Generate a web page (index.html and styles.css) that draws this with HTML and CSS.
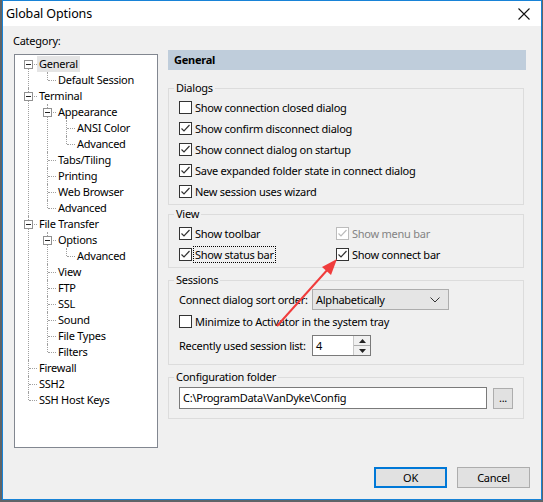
FILE: index.html
```html
<!DOCTYPE html>
<html>
<head>
<meta charset="utf-8">
<link rel="stylesheet" href="styles.css">
</head>
<body>
<div class="window">
  <div class="titlebar">
    <span class="title">Global Options</span>
    <svg class="close" width="12" height="12" viewBox="0 0 12 12"><path d="M0.5 0.5L11.5 11.5M11.5 0.5L0.5 11.5" stroke="#111" stroke-width="1.1" fill="none"/></svg>
  </div>
  <div class="content">
    <div class="main">
      <div class="leftcol">
        <div class="catlabel">Category:</div>
        <div class="treebox">
          <ul class="tree root">
            <li class="first"><div class="row"><span class="exp"></span><span class="lbl sel">General</span></div>
              <ul><li class="last"><div class="row"><span class="lbl">Default Session</span></div></li></ul>
            </li>
            <li><div class="row"><span class="exp"></span><span class="lbl">Terminal</span></div>
              <ul>
                <li><div class="row"><span class="exp"></span><span class="lbl">Appearance</span></div>
                  <ul>
                    <li><div class="row"><span class="lbl">ANSI Color</span></div></li>
                    <li class="last"><div class="row"><span class="lbl">Advanced</span></div></li>
                  </ul>
                </li>
                <li><div class="row"><span class="lbl">Tabs/Tiling</span></div></li>
                <li><div class="row"><span class="lbl">Printing</span></div></li>
                <li><div class="row"><span class="lbl">Web Browser</span></div></li>
                <li class="last"><div class="row"><span class="lbl">Advanced</span></div></li>
              </ul>
            </li>
            <li><div class="row"><span class="exp"></span><span class="lbl">File Transfer</span></div>
              <ul>
                <li><div class="row"><span class="exp"></span><span class="lbl">Options</span></div>
                  <ul>
                    <li class="last"><div class="row"><span class="lbl">Advanced</span></div></li>
                  </ul>
                </li>
                <li><div class="row"><span class="lbl">View</span></div></li>
                <li><div class="row"><span class="lbl">FTP</span></div></li>
                <li><div class="row"><span class="lbl">SSL</span></div></li>
                <li><div class="row"><span class="lbl">Sound</span></div></li>
                <li><div class="row"><span class="lbl">File Types</span></div></li>
                <li class="last"><div class="row"><span class="lbl">Filters</span></div></li>
              </ul>
            </li>
            <li><div class="row"><span class="lbl">Firewall</span></div></li>
            <li><div class="row"><span class="lbl">SSH2</span></div></li>
            <li class="last"><div class="row"><span class="lbl">SSH Host Keys</span></div></li>
          </ul>
        </div>
      </div>
      <div class="rightcol">
        <div class="header">General</div>
        <fieldset class="group">
          <legend>Dialogs</legend>
          <div class="chk"><span class="cb"></span><span>Show connection closed dialog</span></div>
          <div class="chk"><span class="cb"><svg width="11" height="11" viewBox="0 0 11 11"><path d="M1.5 5.5L4 8L9.5 2" stroke="#333" stroke-width="1.2" fill="none"/></svg></span><span>Show confirm disconnect dialog</span></div>
          <div class="chk"><span class="cb"><svg width="11" height="11" viewBox="0 0 11 11"><path d="M1.5 5.5L4 8L9.5 2" stroke="#333" stroke-width="1.2" fill="none"/></svg></span><span>Show connect dialog on startup</span></div>
          <div class="chk"><span class="cb"><svg width="11" height="11" viewBox="0 0 11 11"><path d="M1.5 5.5L4 8L9.5 2" stroke="#333" stroke-width="1.2" fill="none"/></svg></span><span>Save expanded folder state in connect dialog</span></div>
          <div class="chk"><span class="cb"><svg width="11" height="11" viewBox="0 0 11 11"><path d="M1.5 5.5L4 8L9.5 2" stroke="#333" stroke-width="1.2" fill="none"/></svg></span><span>New session uses wizard</span></div>
        </fieldset>
        <fieldset class="group">
          <legend>View</legend>
          <div class="viewgrid">
            <div class="chk"><span class="cb"><svg width="11" height="11" viewBox="0 0 11 11"><path d="M1.5 5.5L4 8L9.5 2" stroke="#333" stroke-width="1.2" fill="none"/></svg></span><span>Show toolbar</span></div>
            <div class="chk disabled"><span class="cb"><svg width="11" height="11" viewBox="0 0 11 11"><path d="M1.5 5.5L4 8L9.5 2" stroke="#bcbcbc" stroke-width="1.2" fill="none"/></svg></span><span>Show menu bar</span></div>
            <div class="chk"><span class="cb"><svg width="11" height="11" viewBox="0 0 11 11"><path d="M1.5 5.5L4 8L9.5 2" stroke="#333" stroke-width="1.2" fill="none"/></svg></span><span class="focus">Show status bar</span></div>
            <div class="chk"><span class="cb"><svg width="11" height="11" viewBox="0 0 11 11"><path d="M1.5 5.5L4 8L9.5 2" stroke="#333" stroke-width="1.2" fill="none"/></svg></span><span>Show connect bar</span></div>
          </div>
        </fieldset>
        <fieldset class="group sessions">
          <legend>Sessions</legend>
          <div class="frow">
            <span class="flabel">Connect dialog sort order:</span>
            <div class="select"><span>Alphabetically</span><svg width="10" height="6" viewBox="0 0 10 6"><path d="M0.5 0.5L5 5L9.5 0.5" stroke="#333" stroke-width="1" fill="none"/></svg></div>
          </div>
          <div class="chk"><span class="cb"></span><span>Minimize to Activator in the system tray</span></div>
          <div class="frow recent">
            <span class="flabel">Recently used session list:</span>
            <div class="spin">
              <span class="spinval">4</span>
              <div class="spinbtns">
                <div class="sbtn"><svg width="7" height="4" viewBox="0 0 7 4"><path d="M0 4L3.5 0L7 4Z" fill="#222"/></svg></div>
                <div class="sbtn"><svg width="7" height="4" viewBox="0 0 7 4"><path d="M0 0L3.5 4L7 0Z" fill="#222"/></svg></div>
              </div>
            </div>
          </div>
        </fieldset>
        <fieldset class="group config">
          <legend>Configuration folder</legend>
          <div class="cfgrow">
            <div class="textbox">C:\ProgramData\VanDyke\Config</div>
            <div class="browse">...</div>
          </div>
        </fieldset>
      </div>
    </div>
    <div class="footer">
      <div class="btn default">OK</div>
      <div class="btn">Cancel</div>
    </div>
  </div>
  <svg class="arrow" width="80" height="80" viewBox="0 0 80 80">
    <line x1="4" y1="74" x2="56" y2="16" stroke="#f03c3c" stroke-width="2"/>
    <path d="M64 7L49 15L58 23Z" fill="#f03c3c"/>
  </svg>
</div>
</body>
</html>
```

FILE: styles.css
```css
* { box-sizing: border-box; }
html, body { margin: 0; padding: 0; }
body {
  width: 543px;
  height: 502px;
  background: #5f6468;
  font-family: "Noto Sans", "Open Sans", sans-serif;
  font-size: 11px;
  letter-spacing: -0.25px;
  color: #000;
  overflow: hidden;
}
.window {
  position: relative;
  margin-left: 2px;
  width: 540px;
  height: 500px;
  border: 1px solid #1883d7;
  background: #f0f0f0;
  display: flex;
  flex-direction: column;
}
.titlebar {
  height: 25px;
  background: #fff;
  display: flex;
  align-items: center;
  justify-content: space-between;
  padding: 0 11px 0 3px;
}
.title { font-size: 12.5px; letter-spacing: -0.1px; }
.close { display: block; margin-top: 1px; }
.content {
  flex: 1;
  display: flex;
  flex-direction: column;
}
.main {
  display: flex;
  padding-left: 11px;
  gap: 10px;
}
.leftcol { width: 144px; }
.catlabel { padding-top: 7px; height: 28px; line-height: 16px; margin-left: -1px; }
.treebox {
  height: 394px;
  background: #fff;
  border: 1px solid #828790;
  padding-top: 1px;
}
.tree, .tree ul { list-style: none; margin: 0; padding: 0; }
.tree ul { padding-left: 19px; }
.tree li { position: relative; }
.tree li::before {
  content: "";
  position: absolute;
  left: 13px;
  top: 0;
  bottom: 0;
  border-left: 1px dotted #a0a0a0;
}
.tree li.first::before { top: 8px; }
.tree li.last::before { bottom: auto; height: 8px; }
.row {
  position: relative;
  height: 16px;
  display: flex;
  align-items: center;
  padding-left: 22px;
}
.row::before {
  content: "";
  position: absolute;
  left: 14px;
  top: 8px;
  width: 8px;
  border-top: 1px dotted #a0a0a0;
}
.exp {
  position: absolute;
  left: 9px;
  top: 4px;
  width: 9px;
  height: 9px;
  border: 1px solid #919191;
  background: #fff;
  z-index: 1;
}
.exp::after {
  content: "";
  position: absolute;
  left: 1px;
  top: 3px;
  width: 5px;
  height: 1px;
  background: #222;
}
.lbl { padding: 0 2px; line-height: 16px; white-space: nowrap; }
.lbl.sel { background: #e5e5e5; }

.rightcol { width: 358px; padding-top: 24px; }
.header {
  height: 20px;
  background: #bfcddb;
  font-weight: bold;
  padding-left: 6px;
  line-height: 20px;
  margin-bottom: 10px;
}
.group {
  margin: 0 2px 0 0;
  padding: 1px 0 2px 0;
  border: 1px solid #dcdcdc;
  min-width: 0;
}
.group + .group { margin-top: 1px; }
.group.sessions, .group.config { margin-top: 4px; }
.group legend {
  padding: 0 2px;
  margin-left: 5px;
  line-height: 16px;
}
.chk {
  height: 21px;
  display: flex;
  align-items: center;
  padding-left: 10px;
  white-space: nowrap;
}
.cb {
  width: 13px;
  height: 13px;
  border: 1px solid #333;
  background: #fff;
  margin-right: 3px;
  flex: none;
  display: flex;
  align-items: center;
  justify-content: center;
}
.cb svg { display: block; }
.chk.disabled { color: #838383; }
.chk.disabled .cb { border-color: #bcbcbc; }
.focus { outline: 1px dotted #000; outline-offset: 0; padding: 0 1px; margin-left: -1px; }
.viewgrid { display: grid; grid-template-columns: 157px 1fr; }

.frow { display: flex; align-items: center; padding-left: 10px; height: 21px; }
.flabel { width: 133px; white-space: nowrap; }
.select {
  width: 137px;
  height: 21px;
  background: #e5e5e5;
  border: 1px solid #adadad;
  display: flex;
  align-items: center;
  justify-content: space-between;
  padding: 0 8px 0 3px;
}
.sessions .chk { height: 23px; }
.recent { margin-top: 2px; margin-bottom: 6px; }
.spin {
  width: 59px;
  height: 21px;
  border: 1px solid #7a7a7a;
  background: #fff;
  display: flex;
}
.spinval { flex: 1; padding-left: 3px; line-height: 19px; }
.spinbtns { width: 17px; display: flex; flex-direction: column; border-left: 1px solid #c8c8c8; }
.sbtn { flex: 1; display: flex; align-items: center; justify-content: center; background: #f0f0f0; }
.sbtn + .sbtn { border-top: 1px solid #adadad; }
.sbtn svg { display: block; }

.config { padding: 2px 0 9px 0; }
.cfgrow { display: flex; align-items: center; padding-left: 10px; gap: 6px; }
.textbox {
  width: 308px;
  height: 22px;
  border: 1px solid #7a7a7a;
  background: #fff;
  padding-left: 3px;
  line-height: 20px;
}
.browse {
  width: 20px;
  height: 21px;
  background: #e1e1e1;
  border: 1px solid #adadad;
  text-align: center;
  line-height: 17px;
}

.footer {
  display: flex;
  justify-content: flex-end;
  gap: 10px;
  padding-right: 11px;
  margin-top: 19px;
}
.btn {
  width: 73px;
  height: 21px;
  background: #e1e1e1;
  border: 1px solid #adadad;
  display: flex;
  align-items: center;
  justify-content: center;
}
.btn.default { border: 2px solid #0078d7; }
.arrow { position: absolute; left: 270px; top: 251px; }
```
